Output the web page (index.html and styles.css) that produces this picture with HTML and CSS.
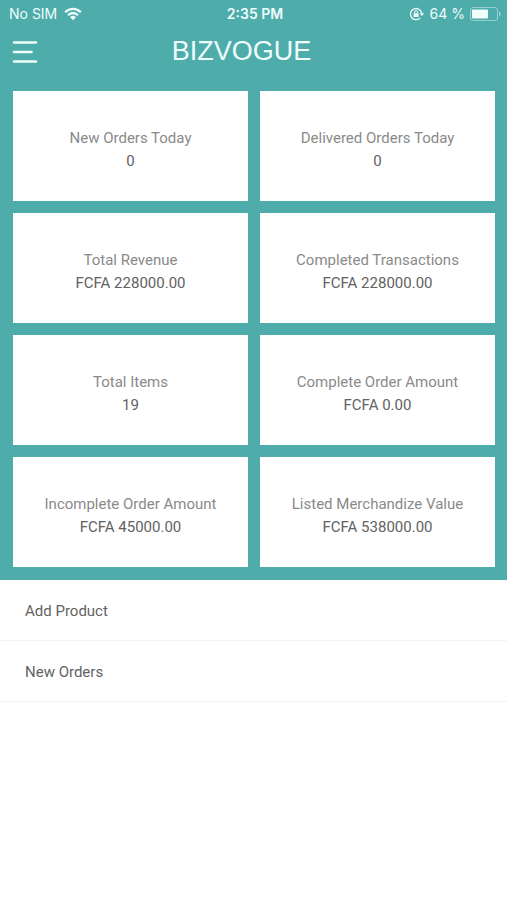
FILE: index.html
```html
<!DOCTYPE html>
<html lang="en">
<head>
<meta charset="utf-8">
<meta name="viewport" content="width=device-width, initial-scale=1">
<title>BIZVOGUE</title>
<link rel="stylesheet" href="styles.css">
</head>
<body>
<div class="top">
  <div class="status">
    <div class="status-left">
      <span>No SIM</span>
      <svg class="wifi" viewBox="0 0 18 14" aria-hidden="true">
        <path d="M1.2 5.2a11 11 0 0 1 15.6 0M4 8.2a7.1 7.1 0 0 1 10 0" fill="none" stroke="currentColor" stroke-width="2.2"/>
        <path d="M6.1 10.2a4.1 4.1 0 0 1 5.8 0L9 13.2z" fill="currentColor"/>
      </svg>
    </div>
    <span class="time">2:35 PM</span>
    <div class="status-right">
      <svg class="lock" viewBox="0 0 16 14" aria-hidden="true">
        <path d="M11.2 10.9A5.6 5.6 0 1 1 12.6 6.2" fill="none" stroke="currentColor" stroke-width="1.3"/>
        <path d="M10.6 6.2h4.6l-2.3 3z" fill="currentColor"/>
        <rect x="4.6" y="6.2" width="5" height="3.8" rx=".5" fill="currentColor"/>
        <path d="M5.6 6.4V5.1a1.5 1.5 0 0 1 3 0v1.3" fill="none" stroke="currentColor"/>
      </svg>
      <span>64 %</span>
      <svg class="battery" viewBox="0 0 31 14" aria-hidden="true">
        <rect x=".5" y=".5" width="27" height="13" rx="2.5" fill="none" stroke="currentColor" opacity=".45"/>
        <rect x="2" y="2.5" width="16" height="9" rx="1" fill="currentColor"/>
        <path d="M29 4.5c2.2.8 2.2 4.2 0 5z" fill="currentColor" opacity=".5"/>
      </svg>
    </div>
  </div>
  <header class="bar">
    <button class="menu" type="button" aria-label="Menu">
      <svg viewBox="0 0 26 24" aria-hidden="true">
        <path d="M2 2.5h22M2 12h17.5M2 21.5h22" fill="none" stroke="currentColor" stroke-width="2.6" stroke-linecap="round"/>
      </svg>
    </button>
    <h1>BIZVOGUE</h1>
  </header>
  <main class="cards">
    <section class="card"><h2>New Orders Today</h2><p>0</p></section>
    <section class="card"><h2>Delivered Orders Today</h2><p>0</p></section>
    <section class="card"><h2>Total Revenue</h2><p>FCFA 228000.00</p></section>
    <section class="card"><h2>Completed Transactions</h2><p>FCFA 228000.00</p></section>
    <section class="card"><h2>Total Items</h2><p>19</p></section>
    <section class="card"><h2>Complete Order Amount</h2><p>FCFA 0.00</p></section>
    <section class="card"><h2>Incomplete Order Amount</h2><p>FCFA 45000.00</p></section>
    <section class="card"><h2>Listed Merchandize Value</h2><p>FCFA 538000.00</p></section>
  </main>
</div>
<nav class="links">
  <a href="#add-product">Add Product</a>
  <a href="#new-orders">New Orders</a>
</nav>
</body>
</html>
```

FILE: styles.css
```css
* { box-sizing: border-box; }
body {
  margin: 0;
  background: #fff;
  font-family: Roboto, "Liberation Sans", sans-serif;
  font-size: 15px;
}
h1, h2, p { margin: 0; font-weight: 400; }
svg { display: block; }
.top { background: #4eacab; }
.status {
  display: grid;
  grid-template-columns: 1fr auto 1fr;
  align-items: center;
  height: 27px;
  padding: 0 6px 0 9px;
  color: #effdfc;
  font-family: Inter, "Liberation Sans", sans-serif;
  font-size: 14px;
}
.status-left, .status-right { display: flex; align-items: center; gap: 7px; }
.status-right { justify-content: flex-end; gap: 5px; }
.time { font-weight: 600; }
.wifi { width: 18px; height: 14px; }
.lock { width: 16px; height: 14px; }
.battery { width: 31px; height: 14px; }
.bar {
  display: grid;
  grid-template-columns: 48px 1fr 72px;
  align-items: center;
  height: 49px;
  color: #effdfc;
}
.menu {
  padding: 0 12px;
  border: 0;
  background: none;
  color: inherit;
  cursor: pointer;
}
.menu svg { width: 26px; height: 24px; }
h1 {
  font-family: "Liberation Sans", Arial, sans-serif;
  font-size: 27px;
  text-align: center;
}
.cards {
  display: grid;
  grid-template-columns: 1fr 1fr;
  gap: 12px;
  padding: 15px 12px 13px 13px;
}
.card {
  display: flex;
  flex-direction: column;
  justify-content: center;
  min-height: 110px;
  padding-top: 7px;
  background: #fff;
  text-align: center;
  line-height: 23px;
}
h2 { font-size: 15px; color: #8a8a8a; }
.card p { color: #626262; }
.links a {
  display: flex;
  align-items: center;
  height: 61px;
  padding: 2px 25px 0;
  border-bottom: 1px solid #f3f3f3;
  color: #626262;
  text-decoration: none;
}
```
